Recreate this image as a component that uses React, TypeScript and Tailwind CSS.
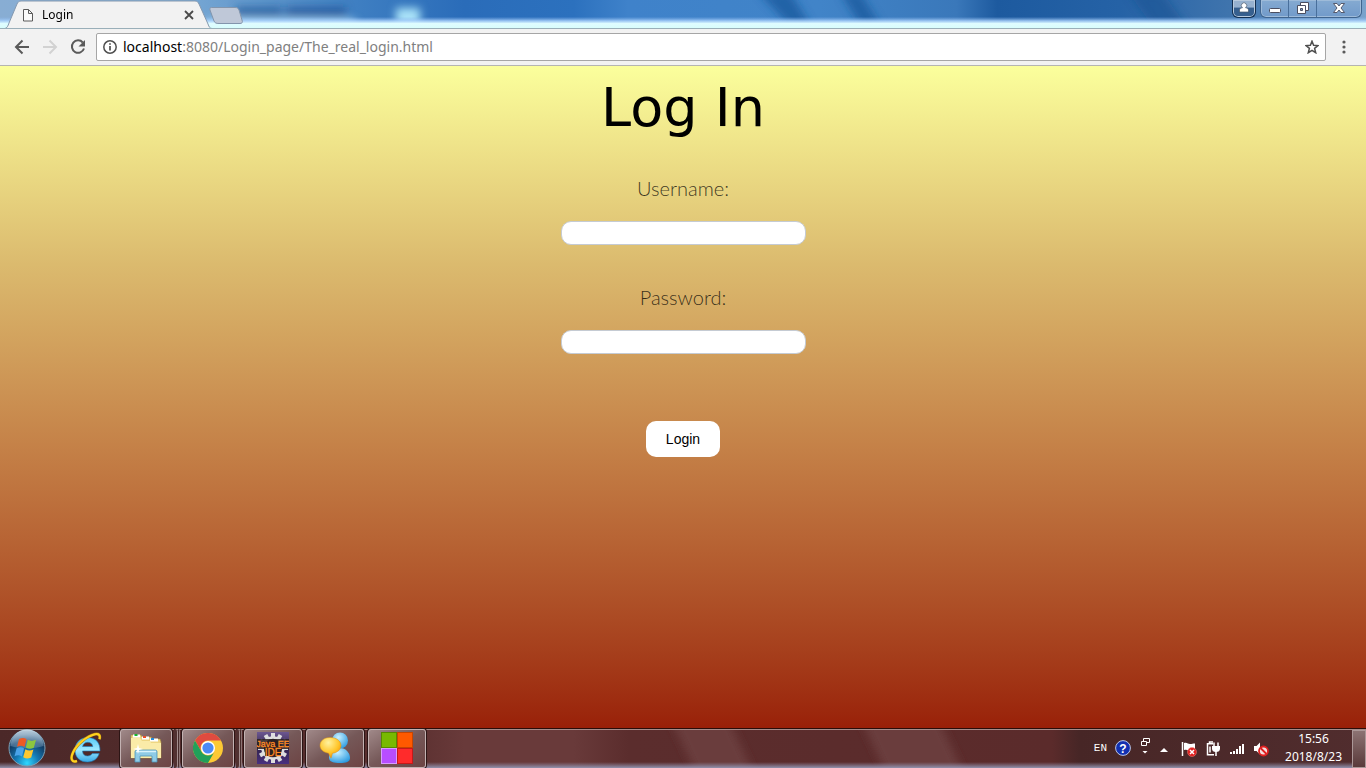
import type { ReactNode } from "react";

function GlassStrip() {
  return (
    <svg
      className="absolute inset-0 h-full w-full"
      viewBox="0 0 1366 28"
      preserveAspectRatio="none"
      aria-hidden="true"
    >
      <defs>
        <linearGradient id="sky" x1="0" x2="1" y1="0" y2="0">
          <stop offset="0" stopColor="#88add3" />
          <stop offset="0.12" stopColor="#7fadd6" />
          <stop offset="0.2" stopColor="#5c93ca" />
          <stop offset="0.26" stopColor="#3f7fc2" />
          <stop offset="0.34" stopColor="#2a6cb9" />
          <stop offset="0.42" stopColor="#2c71be" />
          <stop offset="0.46" stopColor="#3f82ca" />
          <stop offset="0.6" stopColor="#4184c8" />
          <stop offset="0.7" stopColor="#3a78ba" />
          <stop offset="0.73" stopColor="#1d5a9f" />
          <stop offset="0.82" stopColor="#2562a6" />
          <stop offset="0.9" stopColor="#3f74ad" />
          <stop offset="1" stopColor="#7aa3cc" />
        </linearGradient>
        <linearGradient id="horizon" x1="0" x2="0" y1="0" y2="1">
          <stop offset="0.6" stopColor="#8ab8f0" stopOpacity="0" />
          <stop offset="0.74" stopColor="#a9d0fa" stopOpacity="0.85" />
          <stop offset="0.84" stopColor="#dffcff" />
          <stop offset="1" stopColor="#d8fdfc" />
        </linearGradient>
        <filter id="soft" x="-20%" y="-100%" width="140%" height="300%">
          <feGaussianBlur stdDeviation="4" />
        </filter>
      </defs>
      <rect width="1366" height="28" fill="url(#sky)" />
      <g filter="url(#soft)">
        <path d="M758 -8h32l22 36h-20z" fill="#1c5b9f" opacity="0.8" />
        <path d="M840 -8h20l22 36h-20z" fill="#1c5b9f" opacity="0.8" />
        <path d="M1128 -8h34l26 36h-34z" fill="#184f90" opacity="0.5" />
        <rect x="236" y="7" width="46" height="9" fill="#1d5594" opacity="0.7" />
        <rect x="286" y="7" width="60" height="9" fill="#1a4f91" opacity="0.7" />
        <rect x="206" y="20" width="150" height="10" fill="#bce6fa" />
        <rect x="396" y="8" width="24" height="18" fill="#a9e2f8" />
      </g>
      <rect width="1366" height="28" fill="url(#horizon)" />
    </svg>
  );
}

function TabStrip() {
  return (
    <header className="relative flex h-7 shrink-0 justify-between overflow-hidden">
      <GlassStrip />
      <div className="relative flex">
        <div className="relative flex h-7 w-52 items-center pt-0.5 pr-3.5 pl-5.5">
          <svg
            className="absolute inset-0 h-7 w-53 overflow-visible"
            viewBox="0 0 212 28"
            aria-hidden="true"
          >
            <path
              d="M5 28.500C7 28 8 26 9 23L17 4C18 2 19 1 21 1H195C197 1 198 2 199 4L208 24C209 27 210 28.500 212 28.500Z"
              fill="#f2f2f2"
              stroke="#8598ae"
            />
          </svg>
          <svg className="relative h-3.5 w-3" viewBox="0 0 12 14" fill="#fafafa" stroke="#5a5a5a" aria-hidden="true">
            <path d="M1.500 1.500h5l4 4v7.500h-9z M6.500 1.500v4h4" />
          </svg>
          <span className="relative ml-2 flex-1 font-['Noto_Sans',sans-serif] text-xs text-black">Login</span>
          <button type="button" aria-label="Close tab" className="relative">
            <svg className="size-2.5" viewBox="0 0 10 10" stroke="#4a4a4a" strokeWidth="1.800">
              <path d="M1 1l8 8M9 1L1 9" />
            </svg>
          </button>
        </div>
        <button type="button" aria-label="New tab" className="relative mt-1.5 h-5">
          <svg className="h-5 w-9" viewBox="0 0 36 20">
            <path
              d="M3.500 1.500H27C29 1.500 30 2 31 4L34 14C35 16.500 34 17.500 32 17.500H11C8 17.500 7 17 6 15L2 4C1.500 2.500 2 1.500 3.500 1.500Z"
              fill="#bfc8d8"
              stroke="#8395ac"
            />
          </svg>
        </button>
      </div>
      <div className="relative flex items-start gap-1 pr-1">
        <button
          type="button"
          aria-label="Profile"
          className="flex h-[18px] w-6 items-center justify-center rounded-b-md border border-t-0 border-[#132f50] bg-linear-to-b from-[#96b1cf] from-40% to-[#365f8e] to-50% pb-1 shadow-[inset_0_0_0_1px_#b8cadd]"
        >
          <svg className="h-3 w-3" viewBox="0 0 12 12" fill="#fff" stroke="#46566c" strokeWidth="0.700" aria-hidden="true">
            <path d="M1.500 11V9C1.500 7.500 3 7 4.500 6.700A2.700 2.700 0 1 1 7.500 6.700C9 7 10.500 7.500 10.500 9v2z" />
          </svg>
        </button>
        <div className="flex h-[18px] overflow-hidden rounded-b-md border border-t-0 border-[#40658f] bg-linear-to-b from-[#85aad1] to-[#719aca] shadow-[inset_0_0_0_1px_#9ebbd9]">
          <button type="button" aria-label="Minimize" className="flex w-7 items-center justify-center border-r border-[#496f9b] pb-0.5">
            <svg className="h-3 w-3" viewBox="0 0 12 12" fill="#fff" stroke="#4b4e60">
              <rect x="0.500" y="6.500" width="11" height="4" rx="1" />
            </svg>
          </button>
          <button type="button" aria-label="Restore" className="flex w-7 items-center justify-center border-r border-[#496f9b] pb-0.5">
            <svg className="h-3 w-3" viewBox="0 0 12 12" fill="#fff" stroke="#4b4e60">
              <path d="M3.500 0.500h8v8h-8z" />
              <path d="M0.500 3.500h8v8h-8z" />
              <path d="M3.500 6.500h2v2h-2z" fill="#7aa0cc" />
            </svg>
          </button>
          <button type="button" aria-label="Close" className="flex w-11 items-center justify-center pb-0.5">
            <svg className="h-3 w-3" viewBox="0 0 12 12" fill="#fff" stroke="#4b4e60" strokeWidth="0.900">
              <path d="M0.500 1.500h3.500L6 4l2-2.500h3.500L8 6l3.500 4.500H8L6 8l-2 2.500H0.500L4 6z" />
            </svg>
          </button>
        </div>
      </div>
    </header>
  );
}

function Toolbar() {
  return (
    <div className="flex h-[38px] shrink-0 items-center border-t border-b border-t-[#9aafb9] border-b-[#b5b5b1] bg-[#f2f2f2] pr-5 pl-3.5">
      <nav className="flex items-center gap-3" aria-label="Page navigation">
        <button type="button" aria-label="Back">
          <svg className="size-4" viewBox="0 0 16 16" fill="none" stroke="#5a5a5a" strokeWidth="2">
            <path d="M15 8H2.500M8.500 1.500L2 8l6.500 6.500" />
          </svg>
        </button>
        <button type="button" aria-label="Forward" disabled>
          <svg className="size-4" viewBox="0 0 16 16" fill="none" stroke="#d2d2d2" strokeWidth="2">
            <path d="M1 8h12.500M7.500 1.500L14 8l-6.500 6.500" />
          </svg>
        </button>
        <button type="button" aria-label="Reload">
          <svg className="size-4" viewBox="0 0 16 16" fill="none" stroke="#5a5a5a" strokeWidth="2">
            <path d="M12.800 3.500A6.200 6.200 0 1 0 14 9.500" />
            <path d="M15 1v6.500H8.500z" fill="#5a5a5a" stroke="none" />
          </svg>
        </button>
      </nav>
      <div className="ml-2.5 flex h-7 flex-1 items-center rounded-xs border border-[#a6a6a6] bg-white px-1.5">
        <svg className="size-3.5 shrink-0" viewBox="0 0 14 14" fill="none" stroke="#4f4f4f" strokeWidth="1.500" aria-hidden="true">
          <circle cx="7" cy="7" r="6.200" />
          <path d="M7 6v4.500M7 3.300v1.500" strokeWidth="1.700" />
        </svg>
        <p className="ml-1.5 flex-1 font-['Noto_Sans',sans-serif] text-sm leading-5 text-[#808080]">
          <span className="text-black">localhost</span>:8080/Login_page/The_real_login.html
        </p>
        <button type="button" aria-label="Bookmark this page">
          <svg className="size-3.5" viewBox="0 0 14 14" fill="none" stroke="#4f4f4f" strokeWidth="1.500">
            <path d="M7 1.200l1.600 4.100 4.400.3-3.400 2.800 1.100 4.300L7 10.300l-3.700 2.400 1.100-4.300L1 5.600l4.400-.3z" />
          </svg>
        </button>
      </div>
      <button type="button" aria-label="Menu" className="ml-4">
        <svg className="h-3.5 w-1" viewBox="0 0 4 14" fill="#5a5a5a">
          <circle cx="2" cy="2" r="1.600" />
          <circle cx="2" cy="7" r="1.600" />
          <circle cx="2" cy="12" r="1.600" />
        </svg>
      </button>
    </div>
  );
}

function Field({ id, label, type }: { id: string; label: string; type: string }) {
  return (
    <div className="flex flex-col items-center gap-[21px]">
      <label htmlFor={id} className="font-['Lato',sans-serif] text-xl leading-6 font-light text-black/75">
        {label}
      </label>
      <input
        id={id}
        type={type}
        className="h-6 w-[245px] rounded-[10px] border border-[#c5cbd3] bg-white px-2 text-sm outline-none"
      />
    </div>
  );
}

function LoginPage() {
  return (
    <main className="flex flex-1 flex-col items-center bg-linear-to-b from-[#fbff9c] via-[#dbba6e] via-30% to-[#992008] pt-2.5">
      <h1 className="font-['DejaVu_Sans',sans-serif] text-[54px] leading-16 font-normal text-black">Log In</h1>
      <form className="mt-9 flex flex-col items-center" onSubmit={(e) => e.preventDefault()}>
        <div className="flex flex-col gap-10">
          <Field id="username" label="Username:" type="text" />
          <Field id="password" label="Password:" type="password" />
        </div>
        <button
          type="submit"
          className="mt-[67px] h-9 rounded-[10px] bg-white px-5 font-['Liberation_Sans',sans-serif] text-sm text-black"
        >
          Login
        </button>
      </form>
    </main>
  );
}

function StartOrb() {
  return (
    <svg className="size-[38px]" viewBox="0 0 38 38" aria-hidden="true">
      <defs>
        <radialGradient id="orb" cx="0.5" cy="0.92" r="0.8">
          <stop offset="0" stopColor="#2fd8ff" />
          <stop offset="0.4" stopColor="#1479b4" />
          <stop offset="0.8" stopColor="#123b63" />
          <stop offset="1" stopColor="#446a8b" />
        </radialGradient>
        <linearGradient id="orbGloss" x1="0" x2="0" y1="0" y2="1">
          <stop offset="0" stopColor="#dce9f2" stopOpacity="0.8" />
          <stop offset="1" stopColor="#7fa8c8" stopOpacity="0.35" />
        </linearGradient>
      </defs>
      <circle cx="19" cy="19" r="18" fill="url(#orb)" stroke="#7da0b5" />
      <path d="M2.500 17A16.500 16.500 0 0 1 35.500 17C26 20 12 20 2.500 17z" fill="url(#orbGloss)" />
      <path d="M11 10c3-1.500 5-1.400 7.500.1L16.500 18c-2.500-1.500-4.500-1.600-7.500-.2z" fill="#ee5a24" />
      <path d="M19.800 10.800c2.700 1.500 5.200 1.400 8.200 0l-2.200 8c-3 1.400-5.300 1.300-8-.2z" fill="#8cc63f" />
      <path d="M8.600 19.300c3-1.400 5-1.300 7.500.2l-2.200 8c-2.500-1.500-4.500-1.600-7.400-.2z" fill="#4aa3e8" />
      <path d="M17.400 20.200c2.700 1.500 5 1.600 8 .2l-2.200 8c-3 1.400-5.300 1.300-8-.2z" fill="#fdc82f" />
    </svg>
  );
}

function ExplorerEIcon() {
  return (
    <svg className="size-8" viewBox="0 0 32 32" fill="none" aria-hidden="true">
      <defs>
        <linearGradient id="ie" x1="0" x2="0" y1="0" y2="1">
          <stop offset="0" stopColor="#55c9f5" />
          <stop offset="0.5" stopColor="#9feaff" />
          <stop offset="1" stopColor="#38a9e6" />
        </linearGradient>
      </defs>
      <path
        d="M30 19H12.500c.2 3.300 2 5 5 5 2.300 0 3.700-.9 4.700-2.400h7C27.500 26.800 23.500 30 17.500 30 9.800 30 5 25.200 5 18S10.200 5.500 17.600 5.500C25.500 5.500 30.300 10.500 30 19zM22.800 14.500c-.3-2.600-2.100-4.200-5-4.200-2.800 0-4.700 1.600-5.200 4.200z"
        fill="url(#ie)"
        stroke="#1c7fc0"
        strokeWidth="0.600"
      />
      <path d="M7 29C2 31 0 27 3 20.500 7 12 17 4 25 2.200c4-.8 5.500 1.200 4.500 5" stroke="#b98512" strokeWidth="2.800" />
      <path d="M7 29C2 31 0 27 3 20.500 7 12 17 4 25 2.200c4-.8 5.500 1.200 4.500 5" stroke="#ffd21f" strokeWidth="2" />
    </svg>
  );
}

function FolderIcon() {
  return (
    <svg className="size-8" viewBox="0 0 32 32" aria-hidden="true">
      <path d="M1 3h10l1 2h9l1 2h8l1 3v16H1z" fill="#eed683" stroke="#a98b3d" strokeWidth="0.600" />
      <path d="M3 2.500h7v3H3z" fill="#fff" />
      <path d="M4.500 2h3v2h-3z" fill="#16b52e" />
      <path d="M12 4.500h7v3h-7z" fill="#fff" />
      <path d="M13 4h3v2h-3z" fill="#e94f2b" />
      <path d="M20 6.500h8v3h-8z" fill="#fff" />
      <path d="M21 6h3v2h-3z" fill="#258bdd" />
      <path d="M1 6h9l2 3h8l1 2h10v15H1z" fill="#faeba8" />
      <path d="M5 30V20c0-1.500 1-2 2-2h18c1.500 0 2 .7 2 2v10h-5v-6H10v6z" fill="#8fcbe6" stroke="#4b94b9" strokeWidth="0.800" />
      <path d="M6 19.500h20" stroke="#d8f3fc" strokeWidth="1.500" />
      <path d="M8 12l1 4 4 1-4 1-1 4-1-4-4-1 4-1z" fill="#fff" />
    </svg>
  );
}

function ChromeIcon() {
  return (
    <svg className="size-[30px]" viewBox="0 0 30 30" aria-hidden="true">
      <circle cx="15" cy="15" r="15" fill="#fcc934" />
      <path d="M2 7.500A15 15 0 0 1 28 7.500H15A7.500 7.500 0 0 0 8.500 18.700z" fill="#df4b40" />
      <path d="M2 7.500A15 15 0 0 0 15 30L21.500 18.800A7.500 7.500 0 0 1 8.500 18.800z" fill="#21a05a" />
      <circle cx="15" cy="15" r="7" fill="#fff" />
      <circle cx="15" cy="15" r="5.600" fill="#4a8af4" />
    </svg>
  );
}

function JavaIcon() {
  const teeth = [0, 30, 60, 90, 120, 150, 180, 210, 240, 270, 300, 330];
  return (
    <svg className="size-8" viewBox="0 0 32 32">
      <defs>
        <linearGradient id="java" x1="0" x2="0" y1="0" y2="1">
          <stop offset="0" stopColor="#6c5791" />
          <stop offset="0.5" stopColor="#33244b" />
          <stop offset="1" stopColor="#493080" />
        </linearGradient>
      </defs>
      <rect width="32" height="32" fill="url(#java)" />
      <g fill="#dedede">
        {teeth.map((angle) => (
          <rect key={angle} x="14" y="1" width="4" height="6" transform={`rotate(${angle} 16 16)`} />
        ))}
      </g>
      <circle cx="16" cy="16" r="10.500" fill="#29212e" stroke="#dedede" strokeWidth="2.500" />
      <rect y="7" width="32" height="10" fill="#2b2020" opacity="0.85" />
      <rect x="8" y="16" width="16" height="8" fill="#2b2020" />
      <g fill="#ff8a24" stroke="#ff8a24" strokeWidth="0.300" fontFamily="Liberation Sans, sans-serif" textAnchor="middle">
        <text x="16" y="15" fontSize="9">Java EE</text>
        <text x="16" y="24" fontSize="10">IDE</text>
      </g>
    </svg>
  );
}

function ChatIcon() {
  return (
    <svg className="size-8" viewBox="0 0 32 32" aria-hidden="true">
      <defs>
        <radialGradient id="bubble" cx="0.4" cy="0.25" r="0.8">
          <stop offset="0" stopColor="#fff2a0" />
          <stop offset="0.6" stopColor="#ffc62b" />
          <stop offset="1" stopColor="#ee8a07" />
        </radialGradient>
        <radialGradient id="person" cx="0.4" cy="0.3" r="0.8">
          <stop offset="0" stopColor="#c9f1ff" />
          <stop offset="1" stopColor="#1f94df" />
        </radialGradient>
      </defs>
      <path d="M10 26c0-7 5-10 11-10s10 5 10 10c0 4-4 5-10 5s-11-1-11-5z" fill="url(#person)" />
      <circle cx="21" cy="8.500" r="8" fill="url(#person)" />
      <path
        d="M11 5.500C5 5.500 1 9 1 13.500c0 4 3.500 7 8.500 7.700l2.500 5 1.500-5c5-.5 8.500-3.700 8.500-7.700 0-4.500-4.500-8-11-8z"
        fill="url(#bubble)"
        stroke="#d8921a"
        strokeWidth="0.500"
      />
    </svg>
  );
}

function SquaresIcon() {
  return (
    <svg className="size-8" viewBox="0 0 32 32" aria-hidden="true">
      <rect x="0.500" y="0.500" width="15" height="15" fill="#78b900" stroke="#578900" />
      <rect x="16.500" y="0.500" width="15" height="15" fill="#ff5900" stroke="#c84500" />
      <rect x="0.500" y="16.500" width="15" height="15" fill="#b84dff" stroke="#d99bff" />
      <rect x="16.500" y="16.500" width="15" height="15" fill="#ff2b2b" stroke="#c81818" />
    </svg>
  );
}

function TaskButton({ label, stacked = false, children }: { label: string; stacked?: boolean; children: ReactNode }) {
  return (
    <div className="flex h-[39px]">
      <button
        type="button"
        aria-label={label}
        className={`flex items-center justify-center rounded-[3px] border border-[#c3b2b2] bg-linear-to-br from-[#a08989] via-[#755858] to-[#6d4444] shadow-[0_0_0_1px_#2c1515] ${stacked ? "w-[52px]" : "w-[58px]"}`}
      >
        {children}
      </button>
      {stacked && <span className="ml-0.5 w-1 rounded-r-[3px] border-r border-[#a48f8f] bg-[#513131]" />}
      {stacked && <span className="mr-0.5 w-0.5 rounded-r-[3px] border-r border-[#8b7474] bg-[#472b2b]" />}
    </div>
  );
}

function TaskbarGlass() {
  return (
    <svg
      className="absolute inset-0 h-full w-full"
      viewBox="0 0 1366 40"
      preserveAspectRatio="none"
      aria-hidden="true"
    >
      <defs>
        <linearGradient id="bar" x1="0" x2="1" y1="0" y2="0">
          <stop offset="0" stopColor="#4b2828" />
          <stop offset="0.3" stopColor="#5b3030" />
          <stop offset="0.34" stopColor="#693a3a" />
          <stop offset="0.42" stopColor="#693a3a" />
          <stop offset="0.46" stopColor="#5b2d2d" />
          <stop offset="0.77" stopColor="#5b2b2b" />
          <stop offset="0.79" stopColor="#472626" />
          <stop offset="1" stopColor="#512d2e" />
        </linearGradient>
        <linearGradient id="barEdge" x1="0" x2="0" y1="0" y2="1">
          <stop offset="0.85" stopColor="#8d8aa5" stopOpacity="0" />
          <stop offset="1" stopColor="#9292ae" />
        </linearGradient>
        <filter id="streak" x="-10%" y="-50%" width="120%" height="200%">
          <feGaussianBlur stdDeviation="4" />
        </filter>
      </defs>
      <rect width="1366" height="40" fill="url(#bar)" />
      <g fill="#6b3c3c" filter="url(#streak)">
        <path d="M670 -10h58l28 60h-58z" />
        <path d="M860 -10h78l28 60h-78z" />
      </g>
      <rect width="1366" height="40" fill="url(#barEdge)" />
      <path d="M0 0.500h1366" stroke="#2b0d09" />
      <path d="M0 1.500h1366" stroke="#a58b88" />
    </svg>
  );
}

function Tray() {
  return (
    <div className="flex h-full items-center text-white">
      <span className="font-['Liberation_Mono',monospace] text-[11px] leading-4">EN</span>
      <svg className="ml-2 size-4" viewBox="0 0 16 16">
        <circle cx="8" cy="8" r="7.400" fill="#1230b0" stroke="#b9c6e8" />
        <text x="8" y="12.500" textAnchor="middle" fill="#fff" fontSize="12" fontWeight="700" fontFamily="Liberation Sans, sans-serif">
          ?
        </text>
      </svg>
      <svg className="ml-2 h-5 w-3" viewBox="0 0 12 20" fill="none" stroke="#fff" aria-hidden="true">
        <path d="M4.500 3V0.500h6v4H8M2.500 3.500h5v4h-5z" />
        <path d="M3.500 13h5L6 15.500z" fill="#fff" stroke="none" />
      </svg>
      <svg className="mt-1 ml-2 h-1.5 w-2.5" viewBox="0 0 10 6" fill="#fff" aria-hidden="true">
        <path d="M1 5h8L5 1z" />
      </svg>
      <svg className="mt-0.5 ml-3 size-4" viewBox="0 0 16 16" aria-hidden="true">
        <path d="M1.500 1v14" stroke="#fff" strokeWidth="1.500" />
        <path d="M3 2c3-1 4 1 6 1s3-.5 5-.5V9c-2 0-3 .5-5 .5S6 8 3 9z" fill="#fff" />
        <circle cx="11" cy="11" r="4.500" fill="#df2020" stroke="#f08b80" strokeWidth="0.500" />
        <path d="M9 9l4 4M13 9l-4 4" stroke="#fff" strokeWidth="1.500" />
      </svg>
      <svg className="mt-0.5 ml-2 size-4" viewBox="0 0 16 16" fill="none" stroke="#fff" strokeWidth="1.500" aria-hidden="true">
        <path d="M8 2.800H2.500v11H9M4.500 2.500V1h3.500M5 5.500v6" />
        <path d="M7 5h8v2.500c0 2.500-1.500 3.500-4 3.500S7 10 7 7.500z" fill="#fff" stroke="none" />
        <path d="M9 1.500v4M13 1.500v4M11 10v5" />
      </svg>
      <svg className="mt-0.5 ml-2 size-4" viewBox="0 0 16 16" fill="#fff" aria-hidden="true">
        <path d="M1 11h2v2H1zM4 10h2v3H4zM7 8h2v5H7zM10 5h2v8h-2zM13 3h2v10h-2z" />
      </svg>
      <svg className="mt-0.5 ml-2 size-4" viewBox="0 0 16 16" aria-hidden="true">
        <path d="M1 5h2.500L7 1.500v12L3.500 10H1z" fill="#fff" />
        <circle cx="10.500" cy="10" r="4.500" fill="#f2dede" stroke="#df2020" strokeWidth="1.800" />
        <path d="M7.500 7l6 6" stroke="#df2020" strokeWidth="1.800" />
      </svg>
      <time className="ml-4 text-center font-['Noto_Sans',sans-serif] text-xs leading-[18px]">
        15:56
        <br />
        2018/8/23
      </time>
      <button
        type="button"
        aria-label="Show desktop"
        className="ml-2.5 h-[38px] w-3.5 self-end border border-[#ab9898] bg-linear-to-b from-[#8c7373] to-[#5a3b3b]"
      />
    </div>
  );
}

function Taskbar() {
  return (
    <footer className="relative h-10 shrink-0 overflow-hidden">
      <TaskbarGlass />
      <div className="relative flex h-full items-center justify-between">
        <div className="flex items-center">
          <button type="button" aria-label="Start" className="ml-2">
            <StartOrb />
          </button>
          <button type="button" aria-label="Internet Explorer" className="mr-4.5 ml-6">
            <ExplorerEIcon />
          </button>
          <div className="flex">
            <TaskButton label="File Explorer" stacked>
              <FolderIcon />
            </TaskButton>
            <TaskButton label="Chrome" stacked>
              <ChromeIcon />
            </TaskButton>
            <div className="flex gap-1">
              <TaskButton label="Java EE IDE">
                <JavaIcon />
              </TaskButton>
              <TaskButton label="Chat">
                <ChatIcon />
              </TaskButton>
              <TaskButton label="Tiles">
                <SquaresIcon />
              </TaskButton>
            </div>
          </div>
        </div>
        <Tray />
      </div>
    </footer>
  );
}

export default function App() {
  return (
    <div className="flex min-h-screen flex-col">
      <TabStrip />
      <Toolbar />
      <LoginPage />
      <Taskbar />
    </div>
  );
}
